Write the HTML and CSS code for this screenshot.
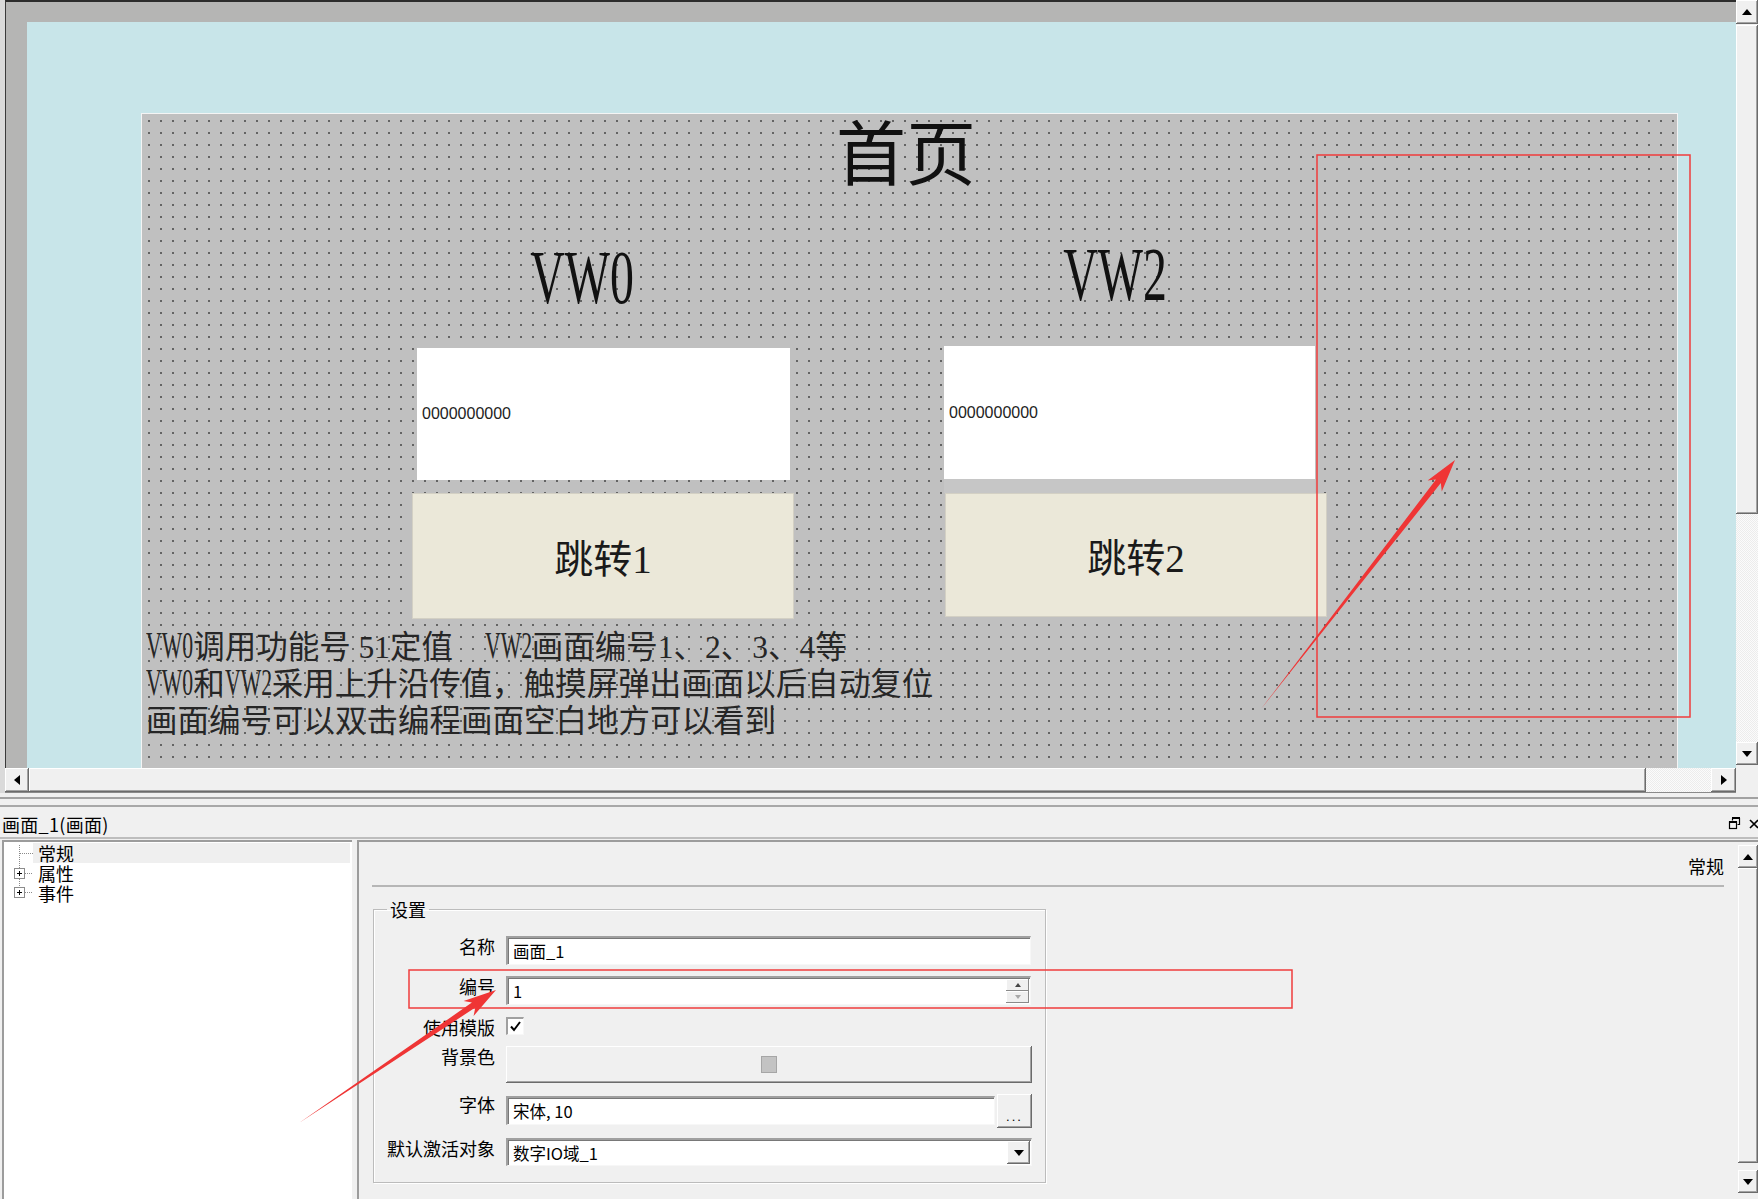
FILE: index.html
```html
<!DOCTYPE html>
<html lang="zh-CN">
<head>
<meta charset="utf-8">
<title>画面_1</title>
<link rel="stylesheet" href="styles.css">
</head>
<body>
<div class="editor">
  <div class="editor-main">
    <div class="viewport">
      <div class="workspace">
        <div class="screen">
          <div class="w-title">首页</div>
          <div class="w-tag w-tag-a">VW0</div>
          <div class="w-tag w-tag-b">VW2</div>
          <div class="w-io w-io-a">0000000000</div>
          <div class="w-io w-io-b">0000000000</div>
          <div class="w-io-edge"></div>
          <div class="w-btn w-btn-a">跳转1</div>
          <div class="w-btn w-btn-b">跳转2</div>
          <div class="w-note">
            <div class="note-line"><span class="lat">VW0</span>调用功能号 51定值    <span class="lat">VW2</span>画面编号1、2、3、4等</div>
            <div class="note-line"><span class="lat">VW0</span>和<span class="lat">VW2</span>采用上升沿传值，触摸屏弹出画面以后自动复位</div>
            <div class="note-line">画面编号可以双击编程画面空白地方可以看到</div>
          </div>
        </div>
      </div>
    </div>
    <div class="vscroll">
      <div class="sb-btn v-btn-up"><svg width="10" height="6" viewBox="0 0 10 6"><path d="M0 6h10L5 0z"/></svg></div>
      <div class="sb-thumb v-thumb"></div>
      <div class="sb-track"></div>
      <div class="sb-btn v-btn-down"><svg width="10" height="6" viewBox="0 0 10 6"><path d="M0 0h10L5 6z"/></svg></div>
      <div class="v-tail"></div>
    </div>
  </div>
  <div class="hscroll-row">
    <div class="hscroll">
      <div class="sb-btn h-btn-left"><svg width="6" height="10" viewBox="0 0 6 10"><path d="M6 0v10L0 5z"/></svg></div>
      <div class="sb-thumb h-thumb"></div>
      <div class="sb-track"></div>
      <div class="sb-btn h-btn-right"><svg width="6" height="10" viewBox="0 0 6 10"><path d="M0 0v10l6-5z"/></svg></div>
    </div>
    <div class="sb-corner"></div>
  </div>
</div>

<div class="splitter"><div class="splitter-line"></div></div>

<div class="panel-title">
  <span class="panel-name">画面_1(画面)</span>
  <span class="panel-tools">
    <svg width="13" height="13" viewBox="0 0 13 13"><path d="M4.5 1.5h7v6h-2M4.5 1.5v2" fill="none" stroke="#000" stroke-width="1.2"/><path d="M4 1h8" stroke="#000" stroke-width="2"/><rect x="1.5" y="5" width="7" height="6.5" fill="#f0f0f0" stroke="#000" stroke-width="1.2"/><path d="M1 5h8" stroke="#000" stroke-width="2"/></svg>
    <svg width="10" height="10" viewBox="0 0 10 10"><path d="M1 1l8 8M9 1l-8 8" stroke="#000" stroke-width="1.6"/></svg>
  </span>
</div>

<div class="panel-body">
  <div class="tree">
    <div class="tree-row">
      <svg class="twig" width="29" height="20" viewBox="0 0 29 20"><path d="M15.5 2v18M16 10.5h13" stroke="#8a8a8a" stroke-dasharray="1 1" fill="none"/></svg>
      <span class="tree-label is-selected">常规</span>
    </div>
    <div class="tree-row">
      <svg class="twig" width="29" height="20" viewBox="0 0 29 20"><path d="M15.5 0v5M15.5 16v4M21 10.5h8" stroke="#8a8a8a" stroke-dasharray="1 1" fill="none"/><rect x="10.5" y="5.5" width="10" height="10" fill="#fff" stroke="#8c8c8c"/><path d="M13 10.5h5M15.5 8v5" stroke="#000"/></svg>
      <span class="tree-label">属性</span>
    </div>
    <div class="tree-row">
      <svg class="twig" width="29" height="20" viewBox="0 0 29 20"><path d="M15.5 0v4M21 9.5h8" stroke="#8a8a8a" stroke-dasharray="1 1" fill="none"/><rect x="10.5" y="4.5" width="10" height="10" fill="#fff" stroke="#8c8c8c"/><path d="M13 9.5h5M15.5 7v5" stroke="#000"/></svg>
      <span class="tree-label">事件</span>
    </div>
  </div>

  <div class="props">
    <div class="props-main">
      <div class="props-head">常规</div>
      <fieldset class="group">
        <legend>设置</legend>
        <div class="form-row row-name">
          <label class="form-label">名称</label>
          <div class="field"><span class="field-text">画面_1</span></div>
        </div>
        <div class="form-row row-num">
          <label class="form-label">编号</label>
          <div class="field">
            <span class="field-text">1</span>
            <span class="spin">
              <span class="spin-btn"><svg width="6" height="4" viewBox="0 0 6 4"><path d="M0 4h6L3 0z" fill="#444"/></svg></span>
              <span class="spin-btn"><svg width="6" height="4" viewBox="0 0 6 4"><path d="M0 0h6L3 4z" fill="#a8a8a8"/></svg></span>
            </span>
          </div>
        </div>
        <div class="form-row row-check">
          <label class="form-label">使用模版</label>
          <span class="check"><svg width="13" height="13" viewBox="0 0 13 13"><path d="M2 6.5l3 3.5 6-8" fill="none" stroke="#000" stroke-width="2"/></svg></span>
        </div>
        <div class="form-row row-color">
          <label class="form-label">背景色</label>
          <div class="color-btn"><span class="swatch"></span></div>
        </div>
        <div class="form-row row-font">
          <label class="form-label">字体</label>
          <div class="field field-font"><span class="field-text">宋体, 10</span></div>
          <div class="more-btn">...</div>
        </div>
        <div class="form-row row-focus">
          <label class="form-label">默认激活对象</label>
          <div class="field field-combo">
            <span class="field-text">数字IO域_1</span>
            <span class="combo-btn"><svg width="10" height="6" viewBox="0 0 10 6"><path d="M0 0h10L5 6z"/></svg></span>
          </div>
        </div>
      </fieldset>
    </div>
    <div class="pscroll">
      <div class="sb-btn p-btn"><svg width="10" height="6" viewBox="0 0 10 6"><path d="M0 6h10L5 0z"/></svg></div>
      <div class="sb-thumb p-thumb"></div>
      <div class="sb-btn p-btn"><svg width="10" height="6" viewBox="0 0 10 6"><path d="M0 0h10L5 6z"/></svg></div>
    </div>
  </div>
</div>

<svg class="marks" width="1758" height="1199" viewBox="0 0 1758 1199">
  <rect x="1317" y="155" width="373" height="562" fill="none" stroke="#ef3d3d" stroke-width="1.5"/>
  <rect x="409" y="970" width="883" height="38" fill="none" stroke="#ef3d3d" stroke-width="1.5"/>
  <polygon points="1261,709 1440.8,483.1 1441.8,491.5 1455,460 1427.6,480.5 1436,479.5" fill="#ef3535"/>
  <polygon points="299,1123 475.3,1007.6 473.6,1016 496,990 463.6,1001 471.9,1002.6" fill="#ef3535"/>
</svg>
</body>
</html>
```

FILE: styles.css
```css
* { box-sizing: border-box; }

html, body {
  margin: 0;
  padding: 0;
}

body {
  width: 1758px;
  height: 1199px;
  overflow: hidden;
  position: relative;
  background: #f0f0f0;
  color: #000;
  font-family: "Noto Sans CJK SC", sans-serif;
  font-size: 18px;
}

/* ---------- screen editor ---------- */
.editor {
  height: 793px;
  padding-left: 5px;
  background: #dadada;
  display: flex;
  flex-direction: column;
}

.editor-main {
  height: 768px;
  display: flex;
}

.viewport {
  flex: 1;
  min-width: 0;
  display: flex;
  background: #b5b5b4;
  border-top: 2px solid #2c2c2c;
  border-left: 1px solid #3a3a3a;
  padding: 20px 0 0 21px;
}

.workspace {
  flex: 1;
  min-width: 0;
  overflow: hidden;
  background: #c8e5e9;
  padding: 91px 0 0 114px;
}

.screen {
  position: relative;
  width: 1537px;
  height: 700px;
  border: 1px solid #f4f4f4;
  border-bottom: none;
  background-color: #c0c0c0;
  background-image: radial-gradient(circle at 1px 1px, #646464 1px, transparent 1.05px);
  background-size: 12px 12px;
  background-position: 6px 6px;
}

.w-title {
  position: absolute;
  left: 684px;
  top: 1px;
  width: 160px;
  text-align: center;
  font-size: 70px;
  line-height: 70px;
  color: #111;
}

.w-tag {
  position: absolute;
  width: 200px;
  text-align: center;
  font-family: "Liberation Serif", serif;
  font-size: 76px;
  line-height: 76px;
  color: #111;
  transform: scaleX(0.63);
}
.w-tag-a { left: 340px; top: 125px; }
.w-tag-b { left: 873px; top: 122px; }

.w-io {
  position: absolute;
  display: flex;
  align-items: center;
  padding-left: 5px;
  background: #fff;
  font-family: "Liberation Sans", sans-serif;
  font-size: 16px;
  color: #222;
}
.w-io-a { left: 275px; top: 234px; width: 373px; height: 132px; }
.w-io-b { left: 802px; top: 232px; width: 371px; height: 133px; }

.w-io-edge {
  position: absolute;
  left: 802px;
  top: 365px;
  width: 371px;
  height: 14px;
  background: #c6c6c6;
}

.w-btn {
  position: absolute;
  display: flex;
  align-items: center;
  justify-content: center;
  background: #ebe8d9;
  border: 1px solid #d3d0c4;
  font-family: "Liberation Serif", "Noto Sans CJK SC", serif;
  font-size: 39px;
  color: #1a1a1a;
}
.w-btn-a { left: 270px; top: 379px; width: 382px; height: 126px; }
.w-btn-b { left: 803px; top: 379px; width: 382px; height: 124px; }

.w-note {
  position: absolute;
  left: 4px;
  top: 515px;
  font-family: "Liberation Serif", "Noto Sans CJK SC", serif;
  font-size: 31.5px;
  line-height: 37px;
  color: #262626;
}
.note-line { white-space: pre; }

/* narrow, tall half-width Latin as the panel font draws it */
.lat {
  display: inline-block;
  transform: scale(0.69, 1.2);
  transform-origin: 0 79%;
  margin-right: -0.67em;
}

/* ---------- scroll bars ---------- */
.sb-btn {
  display: flex;
  align-items: center;
  justify-content: center;
  background: #f0f0f0;
  box-shadow: inset -1px -1px 0 #6b6b6b, inset 1px 1px 0 #fff, inset -2px -2px 0 #a3a3a3;
}
.sb-btn svg { display: block; }

.sb-thumb {
  background: #f0f0f0;
  box-shadow: inset -1px -1px 0 #6b6b6b, inset 1px 1px 0 #fff, inset -2px -2px 0 #a3a3a3;
}

.sb-track {
  flex: 1;
  background: repeating-conic-gradient(#fbfbfb 0% 25%, #ececec 0% 50%) 0 0 / 2px 2px;
}

.vscroll {
  width: 22px;
  display: flex;
  flex-direction: column;
  background: #f0f0f0;
}
.v-btn-up { height: 24px; }
.v-thumb { height: 489px; margin-top: 1px; }
.v-btn-down { height: 23px; }
.v-tail { height: 3px; }

.hscroll-row {
  height: 25px;
  display: flex;
}

.hscroll {
  flex: 1;
  display: flex;
  background: #f0f0f0;
  border-bottom: 1px solid #8a8a8a;
}
.h-btn-left { width: 24px; }
.h-thumb { width: 1617px; }
.h-btn-right { width: 25px; }

.sb-corner {
  width: 22px;
  background: #f0f0f0;
}

/* ---------- property panel ---------- */
.splitter {
  height: 17px;
  padding-top: 4px;
}
.splitter-line {
  height: 10px;
  border-top: 2px solid #a2a2a2;
  border-bottom: 2px solid #a8a8a8;
}

.panel-title {
  height: 29px;
  display: flex;
  align-items: center;
  padding-left: 2px;
  border-bottom: 2px solid #bdbdbd;
  overflow: hidden;
}
.panel-name {
  flex: 1;
  font-size: 18px;
  letter-spacing: 0.3px;
}
.panel-tools {
  display: flex;
  align-items: center;
  gap: 8px;
  margin-right: -1px;
}
.panel-tools svg { display: block; }

.panel-body {
  height: 360px;
  padding-top: 1px;
  display: flex;
}

.tree {
  width: 350px;
  margin-left: 2px;
  background: #fff;
  border-top: 2px solid #9c9c9c;
  border-left: 2px solid #9c9c9c;
  padding-top: 1px;
}

.tree-row {
  height: 20px;
  display: flex;
  align-items: stretch;
}
.twig { display: block; flex: none; }
.tree-label {
  flex: 1;
  margin-right: 2px;
  padding-left: 5px;
  font-size: 18px;
  line-height: 20px;
}
.tree-label.is-selected { background: #efefef; }

.props {
  flex: 1;
  margin-left: 5px;
  display: flex;
  border-top: 2px solid #9c9c9c;
  border-left: 2px solid #9c9c9c;
  background: #f0f0f0;
}

.props-main {
  flex: 1;
  padding: 0 14px 0 13px;
}

.props-head {
  height: 45px;
  padding-top: 4px;
  display: flex;
  align-items: center;
  justify-content: flex-end;
  border-bottom: 2px solid #b6b6b6;
  font-size: 18px;
}

.group {
  width: 673px;
  height: 284px;
  margin: 12px 0 0 1px;
  padding: 0;
  border: 1px solid #bcbcbc;
  box-shadow: inset 1px 1px 0 #fff, 1px 1px 0 #fff;
}
.group legend {
  margin-left: 13px;
  padding: 0 3px;
  font-size: 18px;
  line-height: 20px;
}

.form-row {
  display: flex;
  align-items: flex-start;
  gap: 11px;
}
.form-label {
  width: 121px;
  flex: none;
  text-align: right;
  font-size: 18px;
  line-height: 20px;
}
.row-name { margin-top: 17px; height: 29px; }
.row-num { margin-top: 11px; height: 29px; }
.row-check { margin-top: 12px; height: 18px; }
.row-color { margin-top: 11px; height: 37px; }
.row-font { margin-top: 11px; height: 34px; }
.row-focus { margin-top: 10px; height: 28px; }

.field {
  width: 525px;
  height: 29px;
  display: flex;
  align-items: center;
  background: #fff;
  border-style: solid;
  border-width: 2px 1px 1px 2px;
  border-color: #a0a0a0 #f7f7f7 #f7f7f7 #a0a0a0;
  box-shadow: inset 1px 1px 0 #787878;
}
.field-text {
  flex: 1;
  padding-left: 5px;
  font-size: 16.5px;
  white-space: pre;
}

.spin {
  width: 23px;
  height: 24px;
  margin-right: 1px;
  display: flex;
  flex-direction: column;
}
.spin-btn {
  flex: 1;
  display: flex;
  align-items: center;
  justify-content: center;
  background: #f0f0f0;
  box-shadow: inset -1px -1px 0 #8a8a8a, inset 1px 1px 0 #fff;
}
.spin-btn svg { display: block; }

.check {
  width: 18px;
  height: 18px;
  display: flex;
  align-items: center;
  justify-content: center;
  background: #fff;
  border-style: solid;
  border-width: 2px 1px 1px 2px;
  border-color: #a0a0a0 #f7f7f7 #f7f7f7 #a0a0a0;
}
.check svg { display: block; }

.color-btn {
  width: 526px;
  height: 37px;
  display: flex;
  align-items: center;
  justify-content: center;
  background: #f0f0f0;
  box-shadow: inset -1px -1px 0 #6b6b6b, inset 1px 1px 0 #fff, inset -2px -2px 0 #a3a3a3;
}
.swatch {
  width: 16px;
  height: 17px;
  background: #c3c3c3;
  border: 1px solid #a6a6a6;
}

.field-font {
  width: 489px;
  margin-top: 2px;
}
.more-btn {
  width: 35px;
  height: 34px;
  margin-left: -9px;
  display: flex;
  align-items: flex-end;
  justify-content: center;
  padding-bottom: 6px;
  background: #f0f0f0;
  box-shadow: inset -1px -1px 0 #6b6b6b, inset 1px 1px 0 #fff, inset -2px -2px 0 #a3a3a3;
  font-family: "Liberation Sans", sans-serif;
  font-size: 13px;
  line-height: 10px;
  letter-spacing: 2px;
}

.field-combo {
  width: 526px;
  height: 28px;
}
.combo-btn {
  width: 23px;
  height: 23px;
  margin-right: 1px;
  display: flex;
  align-items: center;
  justify-content: center;
  background: #f0f0f0;
  box-shadow: inset -1px -1px 0 #6b6b6b, inset 1px 1px 0 #fff, inset -2px -2px 0 #a3a3a3;
}
.combo-btn svg { display: block; }

.pscroll {
  width: 20px;
  padding-top: 3px;
  display: flex;
  flex-direction: column;
}
.p-btn { height: 23px; }
.p-thumb {
  height: 295px;
  margin-bottom: 7px;
}

/* ---------- annotation layer ---------- */
.marks {
  position: absolute;
  left: 0;
  top: 0;
  pointer-events: none;
}
```
